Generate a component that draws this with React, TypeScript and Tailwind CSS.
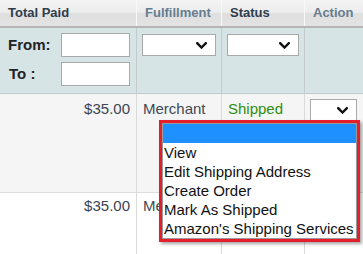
import React from "react";

function Chevron() {
  return (
    <svg width="11" height="7" viewBox="0 0 11 7" className="block">
      <polyline points="1.2,1.2 5.5,5.5 9.8,1.2" fill="none" stroke="#111" strokeWidth="2.4" strokeLinecap="square" />
    </svg>
  );
}

function FakeSelect({ w, className = "" }: { w: string; className?: string }) {
  return (
    <div className={`${w} h-[22px] bg-white border border-[#a9a9a9] flex items-center justify-end pr-[8px] ${className}`}>
      <Chevron />
    </div>
  );
}

export default function App() {
  const font = { fontFamily: '"Liberation Sans", Arial, sans-serif' };
  const hdr = "h-[26px] flex items-center pl-[8px] text-[13px] font-bold border-r border-r-[#f9f9f9]";
  return (
    <div className="relative w-[363px] h-[254px] overflow-hidden bg-white" style={font}>
      {/* header */}
      <div className="grid grid-cols-[137px_85px_83px_58px] border-b-2 border-b-[#b5b5b5] bg-[linear-gradient(#f4f4f4,#ececec_48%,#dfdfdf_52%,#e3e3e3)]">
        <div className={`${hdr} text-[#2e3d4c]`}>Total Paid</div>
        <div className={`${hdr} text-[#667d90]`}>Fulfillment</div>
        <div className={`${hdr} text-[#2e3d4c]`}>Status</div>
        <div className={`${hdr} text-[#667d90] border-r-0`}>Action</div>
      </div>
      {/* filter row */}
      <div className="grid grid-cols-[137px_85px_83px_58px] h-[66px] bg-[#d6e4e6] border-b border-b-[#c2cbcc]">
        <div className="border-r border-r-[#c2cacb] pt-[5px] pl-[8px] flex flex-col gap-[5px]">
          <div className="flex items-center h-[24px]">
            <span className="w-[53px] text-[15px] font-bold text-[#222]">From:</span>
            <div className="w-[69px] h-[24px] bg-white border border-[#a9a9a9]" />
          </div>
          <div className="flex items-center h-[24px]">
            <span className="w-[53px] pl-[1px] text-[15px] font-bold text-[#222]">To :</span>
            <div className="w-[69px] h-[24px] bg-white border border-[#a9a9a9]" />
          </div>
        </div>
        <div className="border-r border-r-[#c2cacb] pt-[6px] pl-[5px]">
          <FakeSelect w="w-[74px]" />
        </div>
        <div className="border-r border-r-[#c2cacb] pt-[6px] pl-[5px]">
          <FakeSelect w="w-[72px]" />
        </div>
        <div />
      </div>
      {/* row 1 */}
      <div className="grid grid-cols-[137px_85px_83px_58px] h-[99px] bg-[#f5f5f5] border-b border-b-[#dcdcdc] text-[15px] leading-[18px]">
        <div className="border-r border-r-[#dadada] pt-[6px] pr-[6px] text-right text-[#3b4450]">$35.00</div>
        <div className="border-r border-r-[#dadada] pt-[6px] pl-[6px] text-[#3d4956]">Merchant</div>
        <div className="border-r border-r-[#dadada] pt-[6px] pl-[6px] text-[#2f8f12]">Shipped</div>
        <div className="pt-[5px] pl-[5px]">
          <FakeSelect w="w-[47px]" />
        </div>
      </div>
      {/* row 2 */}
      <div className="grid grid-cols-[137px_85px_83px_58px] h-[80px] bg-white text-[15px] leading-[18px]">
        <div className="border-r border-r-[#dadada] pt-[4px] pr-[6px] text-right text-[#3b4450]">$35.00</div>
        <div className="border-r border-r-[#dadada] pt-[4px] pl-[6px] text-[#3d4956]">Merchant</div>
        <div className="border-r border-r-[#dadada]" />
        <div />
      </div>
      {/* dropdown overlay */}
      <div className="absolute left-[159px] top-[120px] w-[201px] border-[3px] border-[#e41e2b] shadow-[2px_2px_3px_rgba(0,0,0,0.35)]">
        <div className="bg-white border border-[#9a9a9a] text-[15px] leading-[19px] text-[#111]">
          <div className="h-[19px] bg-[#1e90ff]" />
          <div className="pl-[1px]">View</div>
          <div className="pl-[1px]">Edit Shipping Address</div>
          <div className="pl-[1px]">Create Order</div>
          <div className="pl-[1px]">Mark As Shipped</div>
          <div className="pl-[1px] whitespace-nowrap">Amazon's Shipping Services</div>
        </div>
      </div>
    </div>
  );
}
